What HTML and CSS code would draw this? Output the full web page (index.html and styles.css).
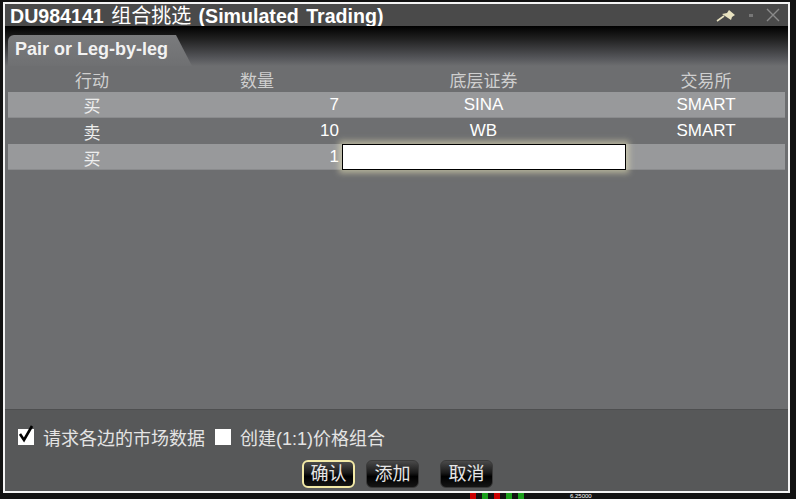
FILE: index.html
```html
<!DOCTYPE html>
<html lang="zh">
<head>
<meta charset="utf-8">
<title>组合挑选</title>
<link rel="stylesheet" href="styles.css">
</head>
<body>
<div class="desk">
  <div class="window">
    <div class="titlebar">
      <div class="title">DU984141 <span class="tcjk">组合挑选</span> (Simulated Trading)</div>
      <div class="tools">
        <svg class="pin" width="20" height="13" viewBox="0 0 20 13">
          <path d="M1 12 L8 7" stroke="#e8e2c0" stroke-width="1.6" fill="none"/>
          <path d="M6 5 L11 4 L13 1 L19 6 L16 8 L15 11 Z" fill="#e8e2c0"/>
        </svg>
        <span class="dot"></span>
        <svg class="close" width="14" height="14" viewBox="0 0 14 14">
          <path d="M1 1 L13 13 M13 1 L1 13" stroke="#8a8a8a" stroke-width="1.4"/>
        </svg>
      </div>
    </div>
    <div class="tabbar">
      <div class="tab">Pair or Leg-by-leg</div>
    </div>
    <div class="content">
      <div class="grid">
        <div class="row head">
          <div class="c1 cjk">行动</div>
          <div class="c2 hc cjk">数量</div>
          <div class="c3 cjk">底层证券</div>
          <div class="c4 cjk">交易所</div>
        </div>
        <div class="row light">
          <div class="c1 cjk">买</div>
          <div class="c2">7</div>
          <div class="c3">SINA</div>
          <div class="c4">SMART</div>
        </div>
        <div class="row dark">
          <div class="c1 cjk">卖</div>
          <div class="c2">10</div>
          <div class="c3">WB</div>
          <div class="c4">SMART</div>
        </div>
        <div class="row light">
          <div class="c1 cjk">买</div>
          <div class="c2">1</div>
          <div class="c3 edit"><div class="input"></div></div>
          <div class="c4"></div>
        </div>
      </div>
    </div>
    <div class="footer">
      <div class="checks">
        <span class="box checked">
          <svg width="18" height="20" viewBox="0 0 18 20"><path d="M3 10 L7 16 L15 2" stroke="#000" stroke-width="2.6" fill="none"/></svg>
        </span>
        <span class="lbl cjk">请求各边的市场数据</span>
        <span class="box"></span>
        <span class="lbl cjk">创建(1:1)价格组合</span>
      </div>
      <div class="buttons">
        <button class="btn primary cjk">确认</button>
        <button class="btn cjk">添加</button>
        <button class="btn gap cjk">取消</button>
      </div>
    </div>
  </div>
  <div class="chartbits">
    <span class="bar r"></span><span class="bar g"></span><span class="bar r"></span><span class="bar g"></span><span class="bar g"></span>
    <span class="num">6.25000</span>
  </div>
</div>
</body>
</html>
```

FILE: styles.css
```css
* { box-sizing: border-box; }
html, body { margin: 0; padding: 0; }
body {
  width: 796px;
  height: 499px;
  overflow: hidden;
  background: #121212;
  font-family: "Liberation Sans", Arial, "Noto Sans CJK SC", sans-serif;
}
.cjk { font-family: "Liberation Sans", "Noto Sans CJK SC", sans-serif; }
.desk {
  position: relative;
  width: 796px;
  height: 499px;
  padding: 2px 0 0 3px;
}
.window {
  width: 787px;
  height: 491px;
  border: 2px solid #f4f4f4;
  background: #2e2e2e;
  display: flex;
  flex-direction: column;
}
.titlebar {
  height: 22px;
  background: #4a4a4a;
  display: flex;
  align-items: center;
  justify-content: space-between;
  padding: 0 8px 0 5px;
}
.title {
  color: #fff;
  font-weight: bold;
  font-size: 19.6px;
  line-height: 22px;
  white-space: nowrap;
  word-spacing: 2px;
}
.tcjk { font-weight: normal; font-family: "Noto Sans CJK SC", sans-serif; font-size: 20px; }
.tools { display: flex; align-items: center; }
.pin { margin-right: 13px; margin-top: 1px; }
.dot { width: 4px; height: 3px; background: #777; margin-right: 13px; }
.close { display: block; }
.tabbar {
  height: 40px;
  background: linear-gradient(#000 0%, #1e1e1e 30%, #55565a 80%, #6d6e70 100%);
  padding: 9px 0 0 3px;
  display: flex;
  align-items: flex-end;
}
.tab {
  width: 184px;
  height: 31px;
  background: linear-gradient(#7a7b7d, #6f7072);
  border-radius: 6px 10px 0 0;
  color: #f2f2f2;
  font-weight: bold;
  font-size: 18px;
  padding: 3px 0 0 7px;
  line-height: 22px;
  clip-path: polygon(0 0, 168px 0, 184px 31px, 0 31px);
  white-space: nowrap;
}
.content {
  height: 343px;
  background: #6d6e70;
  padding: 0 3px;
}
.grid { display: flex; flex-direction: column; }
.row {
  display: grid;
  grid-template-columns: 168px 165px 285px 160px;
  height: 26px;
  align-items: center;
  color: #fff;
  font-size: 17px;
}
.row.head { color: #cfcfcf; font-size: 17px; }
.row.light { background: #98999b; border-bottom: 1px solid #8a8b8d; }
.row.dark { background: #6e6f71; }
.c1 { text-align: center; color: #ededed; font-size: 17px; }
.c2 { text-align: right; padding-right: 2px; }
.row .c2.hc { text-align: left; padding-left: 64px; padding-right: 0; }
.c3 { text-align: center; }
.c4 { text-align: center; }
.head .c1, .head .c3, .head .c4 { color: #cfcfcf; }
.edit { height: 26px; position: relative; }
.input {
  position: absolute;
  left: 1px;
  top: 0;
  width: 284px;
  height: 26px;
  background: #fff;
  border: 1px solid #000;
  box-shadow: 0 0 6px 3px rgba(240, 235, 190, 0.55);
}
.footer {
  flex: 1;
  background: #575859;
  padding: 17px 0 0 13px;
  border-top: 1px solid #4e4f50;
}
.checks { display: flex; align-items: center; height: 20px; white-space: nowrap; }
.box {
  width: 16px;
  height: 16px;
  background: #fff;
  display: inline-block;
  position: relative;
  flex: none;
}
.box.checked svg { position: absolute; left: -1px; top: -5px; }
.lbl { color: #e4e4e4; font-size: 18px; margin: 0 10px 0 9px; }
.buttons { display: flex; margin: 13px 0 0 284px; }
.btn {
  width: 53px;
  height: 28px;
  border-radius: 6px;
  border: 1px solid #3a3a3a;
  background: linear-gradient(#4a4a4a 0%, #1a1a1a 45%, #000 60%, #151515 100%);
  color: #e6e6e6;
  font-size: 18px;
  padding: 0;
  margin-right: 11px;
  line-height: 24px;
}
.btn.primary { border: 2px solid #f2e9a6; }
.btn.gap { margin-left: 10px; }
.chartbits {
  position: absolute;
  left: 470px;
  top: 493px;
  height: 6px;
  display: flex;
  align-items: center;
  gap: 6px;
}
.bar { width: 6px; height: 6px; }
.bar.r { background: #c00; }
.bar.g { background: #1ca01c; }
.num { color: #fff; font-size: 6px; margin-left: 40px; line-height: 6px; height: 6px; }
```
